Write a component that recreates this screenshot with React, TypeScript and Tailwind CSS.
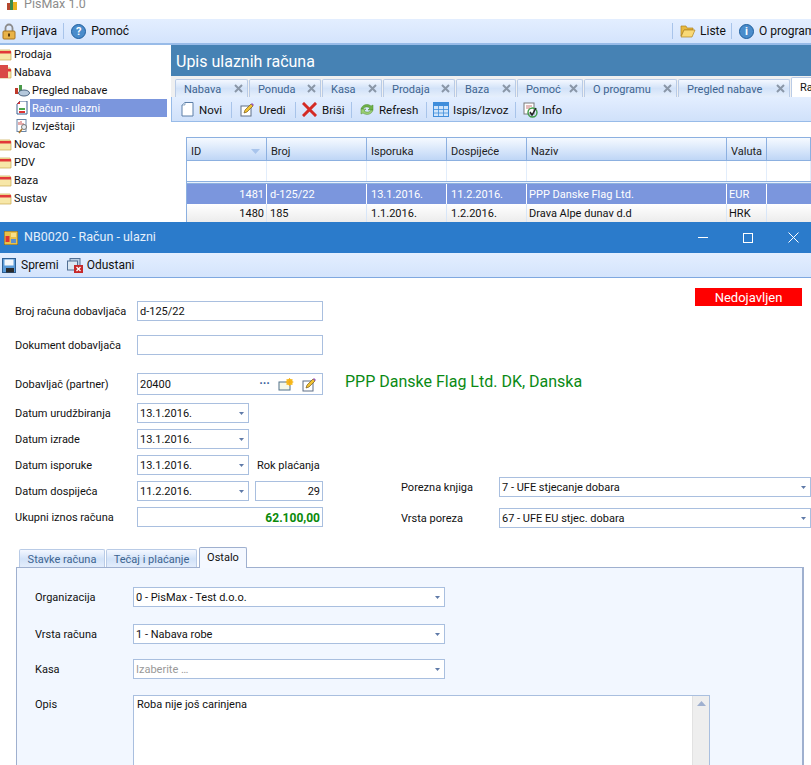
import React from "react";

const F = "font-['Roboto',sans-serif]";
const COLS = "grid grid-cols-[80px_100px_80px_80px_200px_40px_1fr]";

function Folder({ open }: { open?: boolean }) {
  return (
    <svg width="12" height="14" viewBox="3 0 12 14" className="shrink-0">
      <path d="M0 3h13l1 2v8H2L0 11z" fill="#f7e7a8" stroke="#c9a94f" strokeWidth="0.7" />
      <rect x="0" y="4" width="14" height="2.5" fill="#e2383a" />
      {open && <rect x="3" y="0" width="8" height="13" fill="#d94a46" />}
    </svg>
  );
}

function Lock() {
  return (
    <svg width="14" height="17" viewBox="0 0 14 17" className="shrink-0">
      <path d="M3.5 8V5a3.5 3.5 0 0 1 7 0v3" fill="none" stroke="#8b8b8b" strokeWidth="1.8" />
      <rect x="1" y="8" width="12" height="8" rx="1" fill="#e9b348" stroke="#a87420" />
      <rect x="6" y="10.5" width="2" height="3" fill="#5b3c0c" />
    </svg>
  );
}

function Round({ ch }: { ch: string }) {
  return (
    <div className="w-[15px] h-[15px] rounded-full bg-[#4a8ccb] border border-[#1f5f9e] flex items-center justify-center text-white text-[11px] font-bold leading-none shrink-0">
      {ch}
    </div>
  );
}

function OpenFolder() {
  return (
    <svg width="16" height="14" viewBox="0 0 16 14" className="shrink-0">
      <path d="M1 2h5l1 2h6v2H4L1 12z" fill="#e8b93e" stroke="#b0821c" strokeWidth="0.7" />
      <path d="M4 6h11l-3 7H1z" fill="#f9d976" stroke="#b0821c" strokeWidth="0.7" />
    </svg>
  );
}

function Doc() {
  return (
    <svg width="13" height="15" viewBox="0 0 13 15" className="shrink-0">
      <path d="M1 3l3-2.5h8V14H1z" fill="#fff" stroke="#5d7fa8" />
      <path d="M1 3h3V.5" fill="#dfe8f2" stroke="#5d7fa8" strokeWidth="0.6" />
    </svg>
  );
}

function Edit() {
  return (
    <svg width="15" height="15" viewBox="0 0 15 15" className="shrink-0">
      <rect x="1" y="4" width="10" height="10" fill="#fff" stroke="#5f6f86" />
      <path d="M4 11l1-3 6-6 2 2-6 6z" fill="#f1c232" stroke="#7a5a1a" strokeWidth="0.7" />
      <path d="M11 2l1-1 2 2-1 1z" fill="#9b59b6" />
    </svg>
  );
}

function NewItem() {
  return (
    <svg width="16" height="13" viewBox="0 0 16 13" className="shrink-0">
      <rect x="1" y="4" width="11" height="8" fill="#f5f7e8" stroke="#50708a" />
      <circle cx="11.5" cy="4" r="3.2" fill="#f6c21c" />
      <path d="M11.5 0v8M7.5 4h8M8.5 1l6 6M14.5 1l-6 6" stroke="#f6a81c" strokeWidth="0.8" />
    </svg>
  );
}

function RedX() {
  return (
    <svg width="15" height="15" viewBox="0 0 15 15" className="shrink-0">
      <path d="M2 2l11 11M13 2L2 13" stroke="#d42a24" strokeWidth="3" strokeLinecap="square" />
    </svg>
  );
}

function RefreshIc() {
  return (
    <svg width="16" height="15" viewBox="0 0 16 15" className="shrink-0">
      <path d="M2 7C3 3 8 1 12 4l2-1v5H9l2-2C8 4 5 5 4 7z" fill="#6fb24a" stroke="#4a8a2e" strokeWidth="0.5" />
      <path d="M14 8c-1 4-6 6-10 3l-2 1V7h5L5 9c3 2 6 1 7-1z" fill="#9ccf74" stroke="#4a8a2e" strokeWidth="0.5" />
    </svg>
  );
}

function TableIc() {
  return (
    <svg width="16" height="15" viewBox="0 0 16 15" className="shrink-0">
      <rect x="0.5" y="0.5" width="15" height="14" fill="#cfe4fb" stroke="#3f8ddb" />
      <rect x="0.5" y="0.5" width="15" height="3.5" fill="#3f8ddb" />
      <path d="M0 7.5h16M0 11h16M5.5 4v11M10.5 4v11" stroke="#3f8ddb" strokeWidth="0.8" />
    </svg>
  );
}

function InfoIc() {
  return (
    <svg width="16" height="16" viewBox="0 0 16 16" className="shrink-0">
      <rect x="1" y="1" width="10" height="11" fill="#fff" stroke="#7a7a7a" />
      <path d="M3 4h6M3 6h4" stroke="#b55" strokeWidth="0.8" />
      <circle cx="9.5" cy="10.5" r="4.5" fill="none" stroke="#3d9b45" strokeWidth="1.4" />
      <path d="M7 10l2 3 4-7" fill="none" stroke="#222" strokeWidth="1.5" />
    </svg>
  );
}

function Save() {
  return (
    <svg width="14" height="15" viewBox="0 0 14 15" className="shrink-0">
      <rect x="0.5" y="0.5" width="13" height="14" fill="#5b9bd8" stroke="#2d5f94" />
      <rect x="2.5" y="1.5" width="9" height="6" fill="#f4f7fb" />
      <rect x="4" y="10" width="8" height="4.5" fill="#2b2b2b" />
    </svg>
  );
}

function Cancel() {
  return (
    <svg width="16" height="15" viewBox="0 0 16 15" className="shrink-0">
      <rect x="3" y="0.5" width="10" height="9" fill="#b9cde3" stroke="#516f94" />
      <rect x="0.5" y="3" width="10" height="9" fill="#dbe7f3" stroke="#516f94" />
      <rect x="7" y="7" width="9" height="8" fill="#c6282a" />
      <path d="M9.5 9l4 4M13.5 9l-4 4" stroke="#fff" strokeWidth="1.3" />
    </svg>
  );
}

function Sep() {
  return <div className="w-px h-[16px] bg-[#a8c4ea] shrink-0" />;
}

function Caret() {
  return (
    <svg width="5" height="3" viewBox="0 0 5 3" className="shrink-0">
      <path d="M0 0h5L2.5 3z" fill="#5f7aa8" />
    </svg>
  );
}

function TreeRow({ label, open }: { label: string; open?: boolean }) {
  return (
    <div className="h-[18px] flex items-center gap-[2px] text-[#111]">
      <Folder open={open} />
      <span className="pt-px">{label}</span>
    </div>
  );
}

function TreeChild({ label, active, icon }: { label: string; active?: boolean; icon: React.ReactNode }) {
  return (
    <div className="h-[18px] flex items-center pl-[14px]">
      <div className="w-[16px] flex justify-center">{icon}</div>
      <div className={active ? "w-[137px] h-[18px] pl-[2px] pt-px flex items-center bg-[#7b96dd] text-white" : "pl-[2px] pt-px text-[#111]"}>{label}</div>
    </div>
  );
}

const TABS = [
  { t: "Nabava", w: "w-[73px]" },
  { t: "Ponuda", w: "w-[72px]" },
  { t: "Kasa", w: "w-[60px]" },
  { t: "Prodaja", w: "w-[72px]" },
  { t: "Baza", w: "w-[60px]" },
  { t: "Pomoć", w: "w-[66px]" },
  { t: "O programu", w: "w-[93px]" },
  { t: "Pregled nabave", w: "w-[112px]" },
];

function Tab({ t, w }: { t: string; w: string }) {
  return (
    <div className={`${w} h-[18px] shrink-0 flex items-center justify-between pl-[8px] pr-[4px] border border-b-0 border-[#b9cbe6] rounded-t-[2px] bg-gradient-to-b from-[#f4f8ff] via-[#d2e2f8] to-[#e6effc] text-[#3d6490]`}>
      <span className="pt-[2px]">{t}</span>
      <svg width="9" height="9" viewBox="0 0 9 9"><path d="M1 1l7 7M8 1L1 8" stroke="#8a97a8" strokeWidth="2" /></svg>
    </div>
  );
}

function Btn({ w, icon, label }: { w: string; icon: React.ReactNode; label: string }) {
  return (
    <div className={`${w} flex items-center shrink-0`}>
      {icon}
      <span className="text-[#111] text-[11.5px] pt-[2px]">{label}</span>
    </div>
  );
}

function Cell({ children, cls }: { children?: React.ReactNode; cls?: string }) {
  return <div className={`pt-px border-r border-[#d8e6f8] flex items-center truncate ${cls ?? ""}`}>{children}</div>;
}

function Input({ w, children, cls }: { w: string; children?: React.ReactNode; cls?: string }) {
  return (
    <div className={`${w} border border-[#a9bfdf] bg-white flex items-center px-[2px] shrink-0 ${cls ?? "h-[20px]"}`}>
      {children}
    </div>
  );
}

function Select({ w, value, gray }: { w: string; value: string; gray?: boolean }) {
  return (
    <div className={`${w} h-[20px] border border-[#a9bfdf] bg-white flex items-center justify-between pl-[2px] pr-[4px] shrink-0`}>
      <span className={gray ? "text-[#999] pt-px" : "text-[#111] pt-px"}>{value}</span>
      <Caret />
    </div>
  );
}

function Row({ label, mt, children }: { label: string; mt: string; children: React.ReactNode }) {
  return (
    <div className={`flex items-center ${mt}`}>
      <div className="w-[122px] shrink-0 text-[#111] whitespace-nowrap pt-px">{label}</div>
      {children}
    </div>
  );
}

function PanelRow({ label, mt, value, gray }: { label: string; mt: string; value: string; gray?: boolean }) {
  return (
    <div className={`flex items-center ${mt}`}>
      <div className="w-[98px] shrink-0 text-[#111] pt-px">{label}</div>
      <Select w="w-[312px]" value={value} gray={gray} />
    </div>
  );
}

const hdr = ["ID", "Broj", "Isporuka", "Dospijeće", "Naziv", "Valuta", ""];

export default function App() {
  return (
    <div className={`w-[811px] h-[765px] overflow-hidden flex flex-col bg-white text-[11px] leading-none ${F}`}>
      <div className="h-[222px] flex flex-col shrink-0 overflow-hidden">
        <div className="h-[19px] flex items-start pl-[7px] shrink-0 overflow-hidden">
          <div className="flex items-end w-[11px] h-[10px]">
            <div className="w-[3px] h-[7px] bg-[#b5482f]" />
            <div className="w-[3px] h-[10px] bg-[#3b8a4b]" />
            <div className="w-[4px] h-[8px] bg-[#e8b01c]" />
          </div>
          <span className="ml-[6px] -mt-[2px] text-[#8c8c8c] text-[12.5px]">PisMax 1.0</span>
        </div>
        <div className="h-[26px] shrink-0 flex items-center bg-gradient-to-b from-[#e3eeff] to-[#d4e4fc] border-b-2 border-[#98bbe8]">
          <div className="flex items-center pl-[2px] gap-[5px]"><Lock /><span className="text-[#111] text-[12px]">Prijava</span></div>
          <div className="ml-[6px]"><Sep /></div>
          <div className="flex items-center pl-[7px] gap-[5px]"><Round ch="?" /><span className="text-[#111] text-[12px]">Pomoć</span></div>
          <div className="ml-auto"><Sep /></div>
          <div className="flex items-center w-[58px] pl-[7px] gap-[4px]"><OpenFolder /><span className="text-[#111] text-[12px]">Liste</span></div>
          <Sep />
          <div className="flex items-center w-[79px] pl-[7px] gap-[5px] overflow-hidden"><Round ch="i" /><span className="text-[#111] text-[12px] whitespace-nowrap">O programu</span></div>
        </div>
        <div className="flex-1 flex min-h-0">
          <div className="w-[171px] shrink-0">
            <TreeRow label="Prodaja" />
            <TreeRow label="Nabava" open />
            <TreeChild label="Pregled nabave" icon={
              <svg width="15" height="13" viewBox="0 0 15 13"><rect x="0" y="4" width="3" height="6" fill="#c0392b" /><rect x="4" y="1" width="3" height="8" fill="#4a9a4a" /><ellipse cx="9" cy="9" rx="5.5" ry="3" fill="#b6c9dc" stroke="#4d6580" /></svg>
            } />
            <TreeChild label="Račun - ulazni" active icon={
              <svg width="12" height="14" viewBox="0 0 12 14"><path d="M1 3l3-3h7v13H1z" fill="#fff" stroke="#3a5f8f" /><path d="M1 3l3-3v3z" fill="#d33" /><rect x="3" y="7" width="6" height="2" fill="#4aa84a" /><rect x="3" y="10" width="6" height="2" fill="#d33" /></svg>
            } />
            <TreeChild label="Izvještaji" icon={
              <svg width="13" height="15" viewBox="0 0 13 15"><rect x="1" y="0.5" width="9" height="12" fill="#fff" stroke="#6a86a8" /><path d="M3 6V3M5 6V2M7 6V4" stroke="#c55" /><circle cx="8" cy="8" r="2.5" fill="#e8edf2" stroke="#777" /><path d="M6 10l-3 4" stroke="#b07a2a" strokeWidth="1.6" /></svg>
            } />
            <TreeRow label="Novac" />
            <TreeRow label="PDV" />
            <TreeRow label="Baza" />
            <TreeRow label="Sustav" />
          </div>
          <div className="flex-1 min-w-0 flex flex-col bg-[#f0f0f0]">
            <div className="h-[31px] shrink-0 bg-[#4682b4] flex items-center pl-[5px] pt-[2px] text-white text-[16px]">Upis ulaznih računa</div>
            <div className="h-[21px] shrink-0 flex items-end pl-[4px] gap-[1px] overflow-hidden">
              {TABS.map((x) => <Tab key={x.t} t={x.t} w={x.w} />)}
              <div className="w-[40px] h-[20px] shrink-0 pl-[8px] flex items-center bg-white border border-b-0 border-[#b9cbe6] rounded-t-[2px] text-[#111] whitespace-nowrap overflow-hidden">Račun - ulazni</div>
            </div>
            <div className="h-[25px] shrink-0 flex items-center pt-px bg-gradient-to-b from-[#e3eeff] to-[#d0e1fa] border-b border-l border-[#98bbe8] pl-[1px]">
              <Btn w="w-[58px] pl-[8px] gap-[5px]" icon={<Doc />} label="Novi" />
              <Sep />
              <Btn w="w-[63px] pl-[8px] gap-[4px]" icon={<Edit />} label="Uredi" />
              <Sep />
              <Btn w="w-[55px] pl-[6px] gap-[5px]" icon={<RedX />} label="Briši" />
              <Sep />
              <Btn w="w-[74px] pl-[7px] gap-[4px]" icon={<RefreshIc />} label="Refresh" />
              <Sep />
              <Btn w="w-[88px] pl-[6px] gap-[4px]" icon={<TableIc />} label="Ispis/Izvoz" />
              <Sep />
              <Btn w="w-[70px] pl-[7px] gap-[3px]" icon={<InfoIc />} label="Info" />
            </div>
            <div className="flex-1 min-h-0 bg-white pl-[15px] pt-[15px] overflow-hidden">
              <div className="border-t border-l border-[#8cb0e0] h-full">
                <div className={`${COLS} h-[23px] bg-gradient-to-b from-[#f6faff] to-[#bfd6f6] border-b border-[#8cb0e0] text-[#222]`}>
                  {hdr.map((h, i) => (
                    <div key={i} className="px-[4px] pt-[5px] border-r border-[#8cb0e0] flex items-center justify-between">
                      <span>{h}</span>
                      {i === 0 && <svg width="9" height="5" viewBox="0 0 9 5" className="mr-[2px]"><path d="M0 0h9L4.5 5z" fill="#a8c4ec" /></svg>}
                    </div>
                  ))}
                </div>
                <div className={`${COLS} h-[20px] bg-white`}>
                  {hdr.map((_, i) => <div key={i} className="border-r border-[#e2edfb]" />)}
                </div>
                <div className="h-[3px] border-y border-[#8cb0e0] bg-[#e8f0fb]" />
                <div className={`${COLS} h-[20px] bg-[#7b96dd] text-white`}>
                  <Cell cls="justify-end pr-[2px] border-white">1481</Cell>
                  <Cell cls="pl-[3px] border-white">d-125/22</Cell>
                  <Cell cls="pl-[4px] border-white">13.1.2016.</Cell>
                  <Cell cls="pl-[4px] border-white">11.2.2016.</Cell>
                  <Cell cls="pl-[2px] border-white">PPP Danske Flag Ltd.</Cell>
                  <Cell cls="pl-[2px] border-white">EUR</Cell>
                  <div />
                </div>
                <div className={`${COLS} h-[18px] bg-gradient-to-b from-white to-[#ececec] text-[#111]`}>
                  <Cell cls="justify-end pr-[2px]">1480</Cell>
                  <Cell cls="pl-[3px]">185</Cell>
                  <Cell cls="pl-[4px]">1.1.2016.</Cell>
                  <Cell cls="pl-[4px]">1.2.2016.</Cell>
                  <Cell cls="pl-[2px]">Drava Alpe dunav d.d</Cell>
                  <Cell cls="pl-[2px]">HRK</Cell>
                  <div />
                </div>
              </div>
            </div>
          </div>
        </div>
      </div>

      <div className="flex-1 min-h-0 flex flex-col overflow-hidden">
        <div className="h-[31px] shrink-0 bg-[#2b7bcb] flex items-center pl-[4px] text-white text-[12px]">
          <svg width="14" height="14" viewBox="0 0 14 14" className="shrink-0"><rect x="0" y="0" width="14" height="14" fill="#e9c14a" stroke="#6a5a2a" /><rect x="1.5" y="5" width="4" height="6" fill="#d33" /><rect x="7" y="2" width="5" height="4" fill="#f7e08a" /><rect x="7" y="8" width="5" height="4" fill="#5b8fd0" /></svg>
          <span className="ml-[6px] text-[#e6f0fb] text-[12.5px]">NB0020 - Račun - ulazni</span>
          <div className="ml-auto flex items-center pr-[12px] gap-[35px]">
            <div className="w-[10px] h-px bg-white" />
            <div className="w-[10px] h-[10px] border border-white" />
            <svg width="11" height="11" viewBox="0 0 11 11"><path d="M0.5 0.5l10 10M10.5 0.5l-10 10" stroke="#fff" /></svg>
          </div>
        </div>
        <div className="h-[25px] shrink-0 flex items-center pl-[2px] bg-gradient-to-b from-[#e3eeff] to-[#d4e4fc] border-b border-[#7fa8e0] text-[12px] text-[#111]">
          <Save />
          <span className="ml-[5px]">Spremi</span>
          <div className="ml-[8px]"><Cancel /></div>
          <span className="ml-[4px]">Odustani</span>
        </div>

        <div className="h-[269px] shrink-0 flex">
          <div className="w-[330px] shrink-0 pl-[15px] pt-[23px]">
            <Row label="Broj računa dobavljača" mt=""><Input w="w-[186px]"><span className="text-[#111] pt-px">d-125/22</span></Input></Row>
            <Row label="Dokument dobavljača" mt="mt-[14px]"><Input w="w-[186px]" /></Row>
            <Row label="Dobavljač (partner)" mt="mt-[18px]">
              <Input w="w-[186px]" cls="h-[22px] justify-between pr-[5px]">
                <span className="text-[#111] pt-px">20400</span>
                <div className="flex items-center gap-[8px]">
                  <span className="text-[#3d5f9e] font-bold text-[12px]">···</span>
                  <NewItem />
                  <Edit />
                </div>
              </Input>
            </Row>
            <Row label="Datum urudžbiranja" mt="mt-[8px]"><Select w="w-[112px]" value="13.1.2016." /></Row>
            <Row label="Datum izrade" mt="mt-[6px]"><Select w="w-[112px]" value="13.1.2016." /></Row>
            <Row label="Datum isporuke" mt="mt-[6px]">
              <Select w="w-[112px]" value="13.1.2016." />
              <span className="ml-[8px] text-[#111] whitespace-nowrap pt-px">Rok plaćanja</span>
            </Row>
            <Row label="Datum dospijeća" mt="mt-[6px]">
              <Select w="w-[112px]" value="11.2.2016." />
              <Input w="w-[68px]" cls="h-[20px] ml-[6px] justify-end"><span className="text-[#111] pt-px">29</span></Input>
            </Row>
            <Row label="Ukupni iznos računa" mt="mt-[6px]">
              <Input w="w-[186px]" cls="h-[20px] justify-end"><span className="text-[#0a8a0a] font-bold text-[12px] pt-px">62.100,00</span></Input>
            </Row>
          </div>
          <div className="flex-1 min-w-0 flex flex-col">
            <div className="flex justify-end pr-[9px] pt-[10px]">
              <div className="w-[107px] h-[18px] pt-px bg-[#ff0000] text-white flex items-center justify-center text-[13px]">Nedojavljen</div>
            </div>
            <div className="ml-[15px] mt-[66px] h-[20px] flex items-center text-[#0a8a14] text-[16px] whitespace-nowrap">PPP Danske Flag Ltd. DK, Danska</div>
            <div className="ml-[71px] mt-[85px] flex items-center">
              <div className="w-[98px] text-[#111] pt-px">Porezna knjiga</div>
              <Select w="w-[312px]" value="7 - UFE stjecanje dobara" />
            </div>
            <div className="ml-[71px] mt-[11px] flex items-center">
              <div className="w-[98px] text-[#111] pt-px">Vrsta poreza</div>
              <Select w="w-[312px]" value="67 - UFE EU stjec. dobara" />
            </div>
          </div>
        </div>

        <div className="h-[21px] shrink-0 flex items-end pl-[19px] gap-[1px]">
          <div className="w-[86px] h-[19px] pt-px flex items-center justify-center border border-b-0 border-[#b9cbe6] rounded-t-[2px] bg-gradient-to-b from-[#f4f8ff] via-[#d2e2f8] to-[#e6effc] text-[#3d6490]">Stavke računa</div>
          <div className="w-[91px] h-[19px] pt-px flex items-center justify-center border border-b-0 border-[#b9cbe6] rounded-t-[2px] bg-gradient-to-b from-[#f4f8ff] via-[#d2e2f8] to-[#e6effc] text-[#3d6490]">Tečaj i plaćanje</div>
          <div className="ml-[1px] w-[48px] h-[21px] flex items-center justify-center border border-b-0 border-[#9fb0cf] rounded-t-[2px] bg-[#f4f8ff] text-[#111] relative z-10 pb-[1px]">Ostalo</div>
        </div>
        <div className="ml-[16px] w-[788px] flex-1 min-h-0 -mt-px bg-[#f2f7ff] border-t border-l border-r-2 border-[#9fb0cf] pl-[18px] pt-[19px]">
          <PanelRow label="Organizacija" mt="" value="0 - PisMax - Test d.o.o." />
          <PanelRow label="Vrsta računa" mt="mt-[17px]" value="1 - Nabava robe" />
          <PanelRow label="Kasa" mt="mt-[15px]" value="Izaberite …" gray />
          <div className="flex items-start mt-[16px]">
            <div className="w-[98px] shrink-0 text-[#111] pt-[4px]">Opis</div>
            <div className="w-[577px] h-[120px] shrink-0 border border-[#a9bfdf] bg-white flex justify-between">
              <div className="pl-[3px] pt-[3px] text-[#111]">Roba nije još carinjena</div>
              <div className="w-[17px] bg-[#eeeeee] border-l border-[#e2e2e2] flex justify-center pt-[5px]">
                <svg width="9" height="5" viewBox="0 0 9 5"><path d="M0 5h9L4.5 0z" fill="#9fb0cf" /></svg>
              </div>
            </div>
          </div>
        </div>
      </div>
    </div>
  );
}
